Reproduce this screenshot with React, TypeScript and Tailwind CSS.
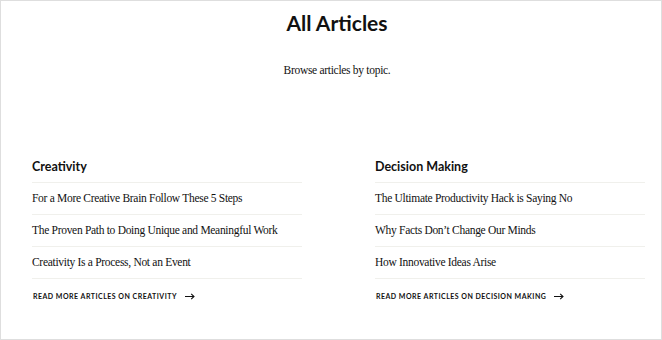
const topics = [
  {
    name: "Creativity",
    articles: [
      "For a More Creative Brain Follow These 5 Steps",
      "The Proven Path to Doing Unique and Meaningful Work",
      "Creativity Is a Process, Not an Event",
    ],
  },
  {
    name: "Decision Making",
    articles: [
      "The Ultimate Productivity Hack is Saying No",
      "Why Facts Don’t Change Our Minds",
      "How Innovative Ideas Arise",
    ],
  },
];

function Arrow() {
  return (
    <svg width="10" height="7" viewBox="0 0 10 7" fill="none" stroke="#111" strokeWidth="1.1" aria-hidden>
      <path d="M0 3.5h9M6.2 0.8L9 3.5 6.2 6.2" />
    </svg>
  );
}

export default function App() {
  return (
    <div className="h-[340px] w-[662px] border border-[#dedede] bg-white text-[#111]">
      <div className="pl-[12px] text-center">
        <h1 className="pt-[8px] text-[21px] font-bold leading-[28px] font-['Lato',sans-serif]">
          All Articles
        </h1>
        <p className="mt-[25px] text-[11.5px] leading-[16px] tracking-[-0.3px] font-['Liberation_Serif',serif]">
          Browse articles by topic.
        </p>
      </div>
      <div className="mt-[81px] flex gap-[73px] pl-[31px]">
        {topics.map((t) => (
          <section key={t.name} className="w-[270px]">
            <h2 className="pb-[7px] text-[12.5px] font-bold leading-[16px] font-['Lato',sans-serif]">
              {t.name}
            </h2>
            <ul className="border-t border-[#f0f0ec]">
              {t.articles.map((a) => (
                <li
                  key={a}
                  className="flex h-[32px] items-center border-b border-[#f0f0ec] text-[11.5px] tracking-[-0.3px] font-['Liberation_Serif',serif]"
                >
                  {a}
                </li>
              ))}
            </ul>
            <a
              href="#"
              className="mt-[12px] flex items-center gap-[8px] pl-[1px] text-[7px] font-bold uppercase tracking-[0.07em] font-['Lato',sans-serif]"
            >
              Read more articles on {t.name}
              <Arrow />
            </a>
          </section>
        ))}
      </div>
    </div>
  );
}
